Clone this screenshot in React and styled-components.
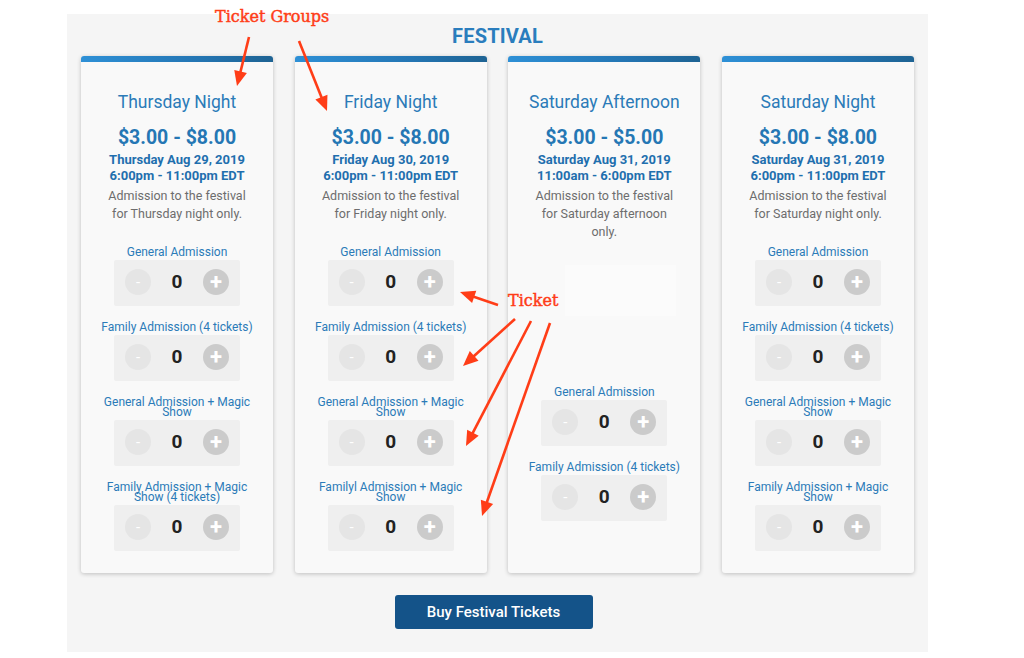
import React from "react";
import styled, { createGlobalStyle } from "styled-components";

const Global = createGlobalStyle`
  html, body { margin: 0; padding: 0; background: #ffffff; }
  body { font-family: Roboto, "Liberation Sans", sans-serif; }
`;

const Page = styled.div`
  position: relative;
  width: 1024px;
  height: 658px;
  overflow: hidden;
  background: #ffffff;
`;

const Panel = styled.section`
  margin: 14px 0 0 67px;
  width: 861px;
  box-sizing: border-box;
  padding: 10px 14px 23px;
  background: #f5f5f5;
  display: flex;
  flex-direction: column;
  align-items: center;
`;

const Heading = styled.h1`
  margin: 0 0 8px;
  font-family: Roboto, sans-serif;
  font-size: 20px;
  line-height: 24px;
  font-weight: 700;
  color: #2a7dbd;
  letter-spacing: 0.2px;
`;

const Grid = styled.div`
  width: 100%;
  display: grid;
  grid-template-columns: repeat(4, 192px);
  justify-content: space-between;
  align-items: stretch;
`;

const Card = styled.article`
  background: #f9f9f9;
  border-radius: 3px;
  box-shadow: 0 1px 4px rgba(0, 0, 0, 0.22);
  display: flex;
  flex-direction: column;
  align-items: center;
  padding-bottom: 22px;
`;

const TopBar = styled.div`
  align-self: stretch;
  height: 6px;
  border-radius: 3px 3px 0 0;
  background: linear-gradient(90deg, #2e90d6 0%, #2476b4 60%, #1e6393 100%);
`;

const GroupTitle = styled.h2`
  margin: 30px 0 0;
  font-size: 17.5px;
  line-height: 20px;
  font-weight: 400;
  color: #2b7bb8;
`;

const Price = styled.div`
  margin-top: 15px;
  font-size: 19.5px;
  line-height: 22px;
  font-weight: 700;
  color: #2577b4;
`;

const DateLine = styled.div`
  margin-top: ${(p) => (p.$first ? "3px" : "0")};
  font-size: 13px;
  line-height: 16px;
  font-weight: 700;
  color: #1f6fae;
`;

const Description = styled.p`
  margin: 3px 0 0;
  max-width: 142px;
  font-size: 12.5px;
  line-height: 18px;
  color: #6d6d6d;
  text-align: center;
`;

const TicketList = styled.div`
  margin-top: 24px;
  align-self: stretch;
  display: flex;
  flex-direction: column;
  align-items: center;
  gap: 16px;
`;

const Ticket = styled.div`
  display: flex;
  flex-direction: column;
  align-items: center;
`;

const TicketLabel = styled.div`
  max-width: 160px;
  margin-bottom: 3px;
  font-size: 12px;
  line-height: 10px;
  color: #2b7bb8;
  text-align: center;
`;

const Stepper = styled.div`
  width: 126px;
  height: 46px;
  box-sizing: border-box;
  padding: 0 11px 3px;
  background: #efefef;
  border-radius: 2px;
  display: flex;
  align-items: center;
  justify-content: space-between;
`;

const RoundButton = styled.button`
  width: 26px;
  height: 26px;
  padding: 0;
  border: none;
  border-radius: 50%;
  background: ${(p) => (p.$plus ? "#cbcbcb" : "#e5e5e5")};
  color: #ffffff;
  font-family: Roboto, sans-serif;
  font-size: ${(p) => (p.$plus ? "22px" : "15px")};
  font-weight: ${(p) => (p.$plus ? 700 : 400)};
  line-height: 26px;
  display: flex;
  align-items: center;
  justify-content: center;
`;

const Count = styled.span`
  font-size: 19px;
  font-weight: 700;
  color: #222222;
`;

const GhostTicket = styled.div`
  align-self: flex-start;
  margin: 0 0 55px 57px;
  width: 111px;
  height: 51px;
  background: #fbfbfb;
`;

const BuyButton = styled.button`
  margin-top: 22px;
  width: 198px;
  height: 34px;
  border: none;
  border-radius: 3px;
  background: #145389;
  color: #ffffff;
  font-family: Roboto, sans-serif;
  font-size: 15px;
  font-weight: 500;
  transform: translateX(-4px);
`;

const Note = styled.div`
  position: absolute;
  left: ${(p) => p.$x}px;
  top: ${(p) => p.$y}px;
  font-family: "DejaVu Serif", "Liberation Serif", serif;
  font-size: 16px;
  line-height: 18px;
  color: #ff3d17;
  -webkit-text-stroke: 0.45px #ff3d17;
  white-space: nowrap;
`;

const Overlay = styled.svg`
  position: absolute;
  left: 0;
  top: 0;
  pointer-events: none;
`;

const groups = [
  {
    title: "Thursday Night",
    price: "$3.00 - $8.00",
    date: "Thursday Aug 29, 2019",
    time: "6:00pm - 11:00pm EDT",
    desc: "Admission to the festival for Thursday night only.",
    tickets: [
      "General Admission",
      "Family Admission (4 tickets)",
      "General Admission + Magic Show",
      "Family Admission + Magic Show (4 tickets)",
    ],
  },
  {
    title: "Friday Night",
    price: "$3.00 - $8.00",
    date: "Friday Aug 30, 2019",
    time: "6:00pm - 11:00pm EDT",
    desc: "Admission to the festival for Friday night only.",
    tickets: [
      "General Admission",
      "Family Admission (4 tickets)",
      "General Admission + Magic Show",
      "Familyl Admission + Magic Show",
    ],
  },
  {
    title: "Saturday Afternoon",
    price: "$3.00 - $5.00",
    date: "Saturday Aug 31, 2019",
    time: "11:00am - 6:00pm EDT",
    desc: "Admission to the festival for Saturday afternoon only.",
    ghost: true,
    tickets: ["General Admission", "Family Admission (4 tickets)"],
  },
  {
    title: "Saturday Night",
    price: "$3.00 - $8.00",
    date: "Saturday Aug 31, 2019",
    time: "6:00pm - 11:00pm EDT",
    desc: "Admission to the festival for Saturday night only.",
    tickets: [
      "General Admission",
      "Family Admission (4 tickets)",
      "General Admission + Magic Show",
      "Family Admission + Magic Show",
    ],
  },
];

const arrows = [
  [249, 37, 237, 86],
  [299, 41, 327, 111],
  [498, 305, 460, 292],
  [515, 319, 463, 366],
  [531, 321, 466, 446],
  [550, 323, 482, 516],
];

function Arrow({ x1, y1, x2, y2 }) {
  const dx = x2 - x1;
  const dy = y2 - y1;
  const len = Math.hypot(dx, dy);
  const ux = dx / len;
  const uy = dy / len;
  const hl = 15;
  const hw = 6.5;
  const bx = x2 - ux * hl;
  const by = y2 - uy * hl;
  const pts = `${x2},${y2} ${bx - uy * hw},${by + ux * hw} ${bx + uy * hw},${by - ux * hw}`;
  return (
    <g>
      <line x1={x1} y1={y1} x2={bx + ux * 2} y2={by + uy * 2} stroke="#ff3d17" strokeWidth="2.6" />
      <polygon points={pts} fill="#ff3d17" />
    </g>
  );
}

function TicketRow({ label }) {
  return (
    <Ticket>
      <TicketLabel>{label}</TicketLabel>
      <Stepper>
        <RoundButton type="button">-</RoundButton>
        <Count>0</Count>
        <RoundButton type="button" $plus>+</RoundButton>
      </Stepper>
    </Ticket>
  );
}

export default function App() {
  return (
    <Page>
      <Global />
      <Panel>
        <Heading>FESTIVAL</Heading>
        <Grid>
          {groups.map((g) => (
            <Card key={g.title}>
              <TopBar />
              <GroupTitle>{g.title}</GroupTitle>
              <Price>{g.price}</Price>
              <DateLine $first>{g.date}</DateLine>
              <DateLine>{g.time}</DateLine>
              <Description>{g.desc}</Description>
              <TicketList>
                {g.ghost && <GhostTicket />}
                {g.tickets.map((t, i) => (
                  <TicketRow key={i} label={t} />
                ))}
              </TicketList>
            </Card>
          ))}
        </Grid>
        <BuyButton type="button">Buy Festival Tickets</BuyButton>
      </Panel>
      <Note $x={215} $y={8}>Ticket Groups</Note>
      <Note $x={508} $y={292}>Ticket</Note>
      <Overlay width="1024" height="658" viewBox="0 0 1024 658">
        {arrows.map(([a, b, c, d], i) => (
          <Arrow key={i} x1={a} y1={b} x2={c} y2={d} />
        ))}
      </Overlay>
    </Page>
  );
}
